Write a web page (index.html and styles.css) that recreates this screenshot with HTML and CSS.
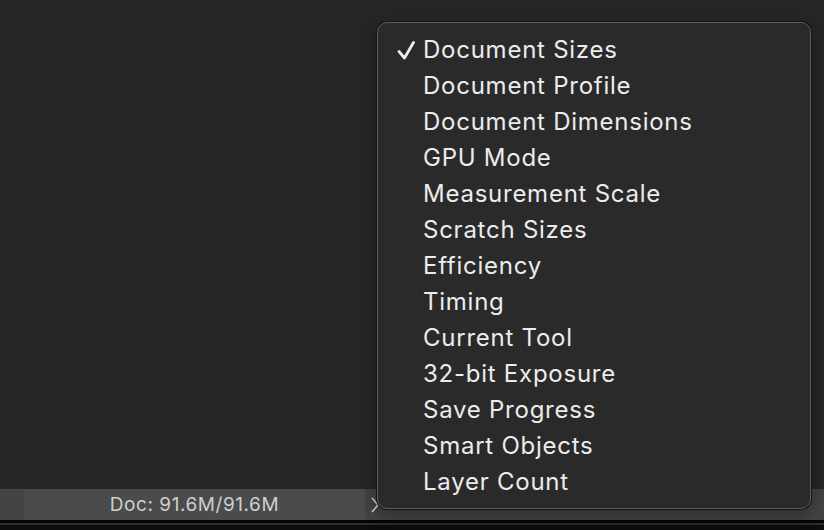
FILE: index.html
```html
<!DOCTYPE html>
<html>
<head>
<meta charset="utf-8">
<link rel="stylesheet" href="styles.css">
</head>
<body>
<div class="app">
  <div class="canvas"></div>
  <div class="statusbar">
    <div class="sb-left"></div>
    <div class="sb-info">Doc: 91.6M/91.6M</div>
    <div class="sb-right">
      <svg class="chev" width="12" height="20" viewBox="0 0 12 20"><path d="M3 3 L9 10 L3 17" fill="none" stroke="#d0d0d0" stroke-width="1.6"/></svg>
    </div>
  </div>
  <div class="footer">
    <div class="f-black"></div>
    <div class="f-line"></div>
    <div class="f-black2"></div>
  </div>
</div>
<div class="menu">
  <ul class="menu-list">
    <li class="item checked"><svg class="check" width="18" height="22" viewBox="0 0 18 22"><path d="M2 12.5 L7.5 19 L16.5 3.5" fill="none" stroke="#ececec" stroke-width="2.8" stroke-linecap="round" stroke-linejoin="round"/></svg>Document Sizes</li>
    <li class="item">Document Profile</li>
    <li class="item">Document Dimensions</li>
    <li class="item">GPU Mode</li>
    <li class="item">Measurement Scale</li>
    <li class="item">Scratch Sizes</li>
    <li class="item">Efficiency</li>
    <li class="item">Timing</li>
    <li class="item">Current Tool</li>
    <li class="item">32-bit Exposure</li>
    <li class="item">Save Progress</li>
    <li class="item">Smart Objects</li>
    <li class="item">Layer Count</li>
  </ul>
</div>
</body>
</html>
```

FILE: styles.css
```css
html, body {
  margin: 0;
  padding: 0;
  width: 824px;
  height: 530px;
  overflow: hidden;
  background: #262626;
  font-family: Inter, "Noto Sans", "Liberation Sans", sans-serif;
}

.app {
  display: flex;
  flex-direction: column;
  height: 530px;
}

.canvas {
  flex: 1;
  background: #262626;
}

.statusbar {
  height: 31px;
  display: flex;
  background: #434343;
}

.sb-left {
  width: 24px;
  background: #444444;
}

.sb-info {
  width: 341px;
  background: #4b4b4b;
  color: #cfcfcf;
  font-size: 19px;
  line-height: 31px;
  text-align: center;
  letter-spacing: 0.55px;
}

.sb-right {
  flex: 1;
  background: #434343;
  display: flex;
  align-items: center;
  padding-left: 4px;
}

.footer {
  height: 10px;
  display: flex;
  flex-direction: column;
}

.f-black {
  height: 3px;
  background: #050505;
}

.f-line {
  height: 2px;
  background: #2c2c2c;
}

.f-black2 {
  flex: 1;
  background: #0d0d0d;
}

.menu {
  position: absolute;
  left: 377px;
  top: 22px;
  width: 432px;
  height: 485px;
  background: #2a2a2a;
  border: 1px solid #5e5e5e;
  border-radius: 10px;
  box-shadow: 0 0 0 1px #141414, 0 6px 18px rgba(0, 0, 0, 0.35);
}

.menu-list {
  list-style: none;
  margin: 0;
  padding: 9px 0 0 0;
}

.item {
  position: relative;
  height: 36px;
  line-height: 36px;
  padding-left: 45px;
  color: #ececec;
  font-size: 24px;
  letter-spacing: 0.75px;
}

.check {
  position: absolute;
  left: 19px;
  top: 7px;
}
```
